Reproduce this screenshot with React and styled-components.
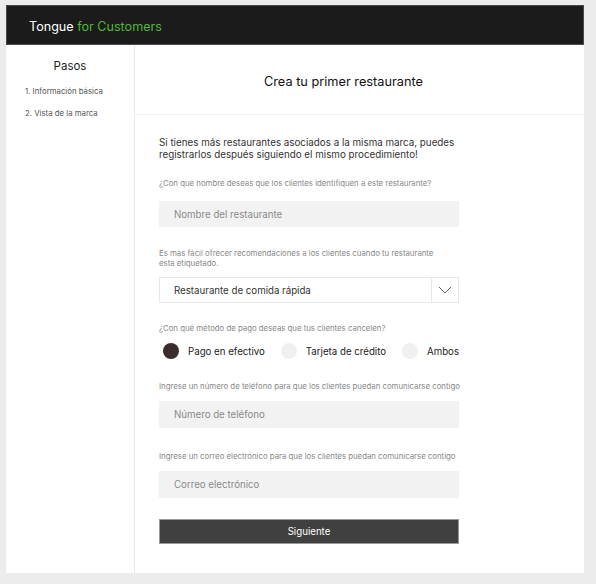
import styled, { createGlobalStyle } from "styled-components";

const GlobalStyle = createGlobalStyle`
  html, body {
    margin: 0;
    background: #ececec;
    font-family: Inter, "Liberation Sans", sans-serif;
  }
  #root {
    padding: 5px 12px 11px 6px;
  }
`;

const Card = styled.div`
  width: 578px;
  background: #ffffff;
  display: flex;
  flex-direction: column;
`;

const TopBar = styled.header`
  box-sizing: border-box;
  height: 40px;
  background: #1b1b1b;
  border: 1px solid #4a4a4a;
  display: flex;
  align-items: center;
  padding: 3px 0 0 22px;
  font-size: 12.6px;
  color: #ffffff;

  span {
    color: #4fb832;
  }
`;

const Body = styled.div`
  display: flex;
  height: 528px;
`;

const Sidebar = styled.aside`
  width: 128px;
  border-right: 1px solid #e8e8e8;
  display: flex;
  flex-direction: column;
  padding-top: 14px;
`;

const SideTitle = styled.div`
  text-align: center;
  font-size: 11.5px;
  color: #222;
  margin-bottom: 12px;
`;

const Step = styled.div`
  font-size: 7.8px;
  color: #555;
  padding-left: 19px;
  height: 22px;
  line-height: 12px;
`;

const Main = styled.main`
  flex: 1;
  display: flex;
  flex-direction: column;
`;

const MainHead = styled.div`
  height: 70px;
  border-bottom: 1px solid #f0f0f0;
  display: flex;
  align-items: center;
  justify-content: center;
  font-size: 12.75px;
  color: #111;
  padding: 3px 32px 0 0;
  box-sizing: border-box;
`;

const Form = styled.div`
  width: 300px;
  margin-left: 24px;
  padding-top: 22px;
  display: flex;
  flex-direction: column;
`;

const Intro = styled.p`
  margin: 0 0 17px;
  font-size: 9.8px;
  line-height: 12px;
  color: #333;
`;

const Label = styled.div`
  font-size: 7.8px;
  line-height: 10px;
  color: #888;
  white-space: ${(p) => (p.wrap ? "normal" : "nowrap")};
  max-width: ${(p) => (p.wrap ? "285px" : "none")};
  margin-bottom: ${(p) => p.gap || 13}px;
`;

const Field = styled.div`
  box-sizing: border-box;
  height: ${(p) => p.h || 26}px;
  background: #f2f2f2;
  display: flex;
  align-items: center;
  padding-left: 15px;
  font-size: 9.7px;
  color: #8a8a8a;
  margin-bottom: ${(p) => p.after || 22}px;
`;

const Select = styled.div`
  box-sizing: border-box;
  height: 26px;
  border: 1px solid #e8e8e8;
  display: flex;
  align-items: stretch;
  font-size: 9.7px;
  color: #333;
  margin-bottom: 20px;
`;

const SelectValue = styled.div`
  flex: 1;
  display: flex;
  align-items: center;
  padding-left: 14px;
`;

const SelectArrow = styled.div`
  width: 26px;
  border-left: 1px solid #e8e8e8;
  display: flex;
  align-items: center;
  justify-content: center;
`;

const RadioRow = styled.div`
  display: flex;
  align-items: center;
  justify-content: space-between;
  margin-bottom: 22px;
  padding-left: 4px;
`;

const RadioOption = styled.label`
  display: flex;
  align-items: center;
  gap: 9px;
  font-size: 9.7px;
  color: #222;
`;

const Dot = styled.span`
  width: 16px;
  height: 16px;
  border-radius: 50%;
  background: ${(p) => (p.on ? "#3b2d2d" : "#f0f0f0")};
`;

const Button = styled.button`
  height: 25px;
  border: 1px solid #9a9a9a;
  background: #404040;
  color: #ffffff;
  font-family: inherit;
  font-size: 9.7px;
`;

export default function App() {
  return (
    <>
      <GlobalStyle />
      <Card>
        <TopBar>
          Tongue&nbsp;<span>for Customers</span>
        </TopBar>
        <Body>
          <Sidebar>
            <SideTitle>Pasos</SideTitle>
            <Step>1. Información básica</Step>
            <Step>2. Vista de la marca</Step>
          </Sidebar>
          <Main>
            <MainHead>Crea tu primer restaurante</MainHead>
            <Form>
              <Intro>
                Si tienes más restaurantes asociados a la misma marca, puedes
                registrarlos después siguiendo el mismo procedimiento!
              </Intro>
              <Label>¿Con que nombre deseas que los clientes identifiquen a este restaurante?</Label>
              <Field after={21}>Nombre del restaurante</Field>
              <Label wrap gap={9}>
                Es más fácil ofrecer recomendaciones a los clientes cuando tu restaurante
                esta etiquetado.
              </Label>
              <Select>
                <SelectValue>Restaurante de comida rápida</SelectValue>
                <SelectArrow>
                  <svg width="14" height="8" viewBox="0 0 14 8">
                    <path d="M1 1l6 6 6-6" fill="none" stroke="#555" strokeWidth="0.9" />
                  </svg>
                </SelectArrow>
              </Select>
              <Label gap={10}>¿Con qué método de pago deseas que tus clientes cancelen?</Label>
              <RadioRow>
                <RadioOption>
                  <Dot on />
                  Pago en efectivo
                </RadioOption>
                <RadioOption>
                  <Dot />
                  Tarjeta de crédito
                </RadioOption>
                <RadioOption>
                  <Dot />
                  Ambos
                </RadioOption>
              </RadioRow>
              <Label gap={10}>Ingrese un número de teléfono para que los clientes puedan comunicarse contigo</Label>
              <Field h={27} after={23}>Número de teléfono</Field>
              <Label gap={10}>Ingrese un correo electrónico para que los clientes puedan comunicarse contigo</Label>
              <Field h={27} after={21}>Correo electrónico</Field>
              <Button>Siguiente</Button>
            </Form>
          </Main>
        </Body>
      </Card>
    </>
  );
}
